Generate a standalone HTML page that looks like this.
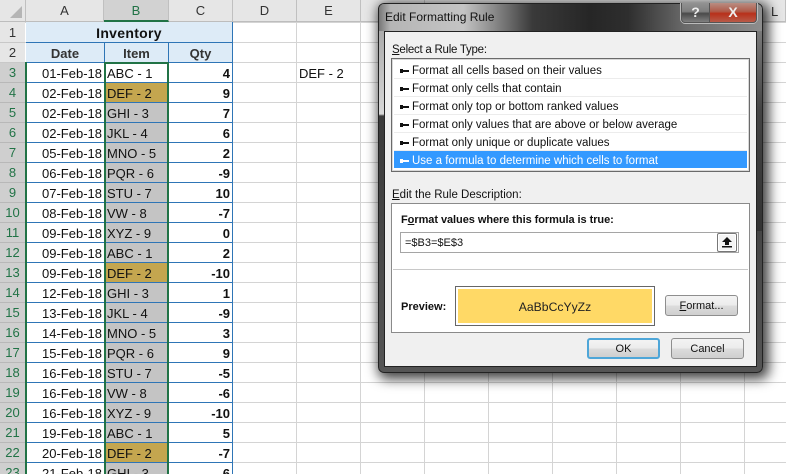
<!DOCTYPE html>
<html><head><meta charset="utf-8">
<style>
html,body{margin:0;padding:0;background:#fff}
#p{position:relative;width:786px;height:474px;overflow:hidden;font-family:"Liberation Sans",sans-serif;font-size:13px;color:#111;
background-color:#fff;
background-image:repeating-linear-gradient(to bottom,transparent 0,transparent 19px,#d4d4d4 19px,#d4d4d4 20px),repeating-linear-gradient(to right,transparent 0,transparent 63px,#d4d4d4 63px,#d4d4d4 64px);
background-position:0 3px,41px 0}
#p div,#p span{position:absolute;white-space:nowrap}
.ch{top:0;height:22px;line-height:22px;background:#e6e6e6;border-right:1px solid #c0c0c0;text-align:center;color:#333;font-size:13px;border-bottom:1px solid #bdbdbd;box-sizing:border-box}
.rh{left:0;width:25px;height:20px;line-height:20px;text-align:center;background:#cfcfcf;color:#217346;border-bottom:1px solid #b8b8b8;box-sizing:border-box;font-size:13px}
.r{left:26px;width:207px;height:20px;box-sizing:border-box;border-bottom:1px solid #2e75b6;border-right:1px solid #2e75b6;line-height:21px;background:#fff}
.r .a{left:0;width:76px;text-align:right}
.r .b{left:79px;width:64px;height:19px;padding-left:2px;box-sizing:border-box;background:#c4c4c4}
.r .d{left:79px;width:64px;height:19px;padding-left:2px;box-sizing:border-box;background:#c4a64f}
.r .c{left:143px;width:61px;text-align:right;font-weight:bold}
.it{left:394px;width:353px;height:17px;line-height:21px;border-bottom:1px solid #ececec;font-size:11.5px;color:#111}
.it span{left:18px;top:0}
.it svg{position:absolute;left:6px;top:7px}
.btn{height:21px;box-sizing:border-box;border:1px solid #8e8e8e;border-radius:3px;line-height:20px;text-align:center;font-size:11px;background:linear-gradient(#f3f3f3 0,#ececec 48%,#dcdcdc 52%,#cfcfcf 100%);color:#111}
</style></head><body>
<div id="p">
<!-- column headers -->
<div style="left:0;top:0;width:26px;height:22px;background:#e6e6e6;border-right:1px solid #c0c0c0;box-sizing:border-box;border-bottom:1px solid #bdbdbd"></div>
<svg style="position:absolute;left:9px;top:5px" width="14" height="14"><polygon points="13,1 13,13 1,13" fill="#b5b5b5"/></svg>
<div class="ch" style="left:26px;width:78px">A</div>
<div class="ch" style="left:104px;width:65px;background:#d2d2d2;border-bottom:2px solid #217346;color:#217346">B</div>
<div class="ch" style="left:169px;width:64px">C</div>
<div class="ch" style="left:233px;width:64px">D</div>
<div class="ch" style="left:297px;width:64px">E</div>
<div class="ch" style="left:361px;width:64px"></div>
<div class="ch" style="left:425px;width:361px"></div>
<div style="left:771px;top:0;height:21px;line-height:23px;color:#333">L</div>
<!-- row headers -->
<div class="rh" style="top:22px;height:21px;line-height:22px;background:#e6e6e6;color:#333;border-bottom-color:#c8c8c8">1</div>
<div class="rh" style="top:43px;background:#e6e6e6;color:#333;border-bottom-color:#c8c8c8">2</div>
<div class="rh" style="top:63px">3</div><div class="rh" style="top:83px">4</div><div class="rh" style="top:103px">5</div><div class="rh" style="top:123px">6</div><div class="rh" style="top:143px">7</div><div class="rh" style="top:163px">8</div><div class="rh" style="top:183px">9</div><div class="rh" style="top:203px">10</div><div class="rh" style="top:223px">11</div><div class="rh" style="top:243px">12</div><div class="rh" style="top:263px">13</div><div class="rh" style="top:283px">14</div><div class="rh" style="top:303px">15</div><div class="rh" style="top:323px">16</div><div class="rh" style="top:343px">17</div><div class="rh" style="top:363px">18</div><div class="rh" style="top:383px">19</div><div class="rh" style="top:403px">20</div><div class="rh" style="top:423px">21</div><div class="rh" style="top:443px">22</div><div class="rh" style="top:463px">23</div>
<!-- title rows -->
<div style="left:26px;top:22px;width:207px;height:21px;box-sizing:border-box;background:#ddebf7;border-bottom:1px solid #2e75b6;border-right:1px solid #2e75b6;text-align:center;font-weight:bold;line-height:23px;font-size:14px;letter-spacing:.3px">Inventory</div>
<div style="left:26px;top:43px;width:207px;height:20px;box-sizing:border-box;background:#ddebf7;border-bottom:1px solid #2e75b6;border-right:1px solid #2e75b6;font-weight:bold;color:#333">
<span style="left:0;width:78px;text-align:center;line-height:21px">Date</span><span style="left:78px;width:65px;text-align:center;line-height:21px">Item</span><span style="left:143px;width:63px;text-align:center;line-height:21px">Qty</span>
<span style="left:78px;top:0;width:1px;height:20px;background:#2e75b6"></span><span style="left:142px;top:0;width:1px;height:20px;background:#2e75b6"></span></div>
<!-- data rows -->
<div class="r" style="top:63px"><span class="a">01-Feb-18</span><span class="b" style="background:#fff">ABC - 1</span><span class="c">4</span></div>
<div class="r" style="top:83px"><span class="a">02-Feb-18</span><span class="d">DEF - 2</span><span class="c">9</span></div>
<div class="r" style="top:103px"><span class="a">02-Feb-18</span><span class="b">GHI - 3</span><span class="c">7</span></div>
<div class="r" style="top:123px"><span class="a">02-Feb-18</span><span class="b">JKL - 4</span><span class="c">6</span></div>
<div class="r" style="top:143px"><span class="a">05-Feb-18</span><span class="b">MNO - 5</span><span class="c">2</span></div>
<div class="r" style="top:163px"><span class="a">06-Feb-18</span><span class="b">PQR - 6</span><span class="c">-9</span></div>
<div class="r" style="top:183px"><span class="a">07-Feb-18</span><span class="b">STU - 7</span><span class="c">10</span></div>
<div class="r" style="top:203px"><span class="a">08-Feb-18</span><span class="b">VW - 8</span><span class="c">-7</span></div>
<div class="r" style="top:223px"><span class="a">09-Feb-18</span><span class="b">XYZ - 9</span><span class="c">0</span></div>
<div class="r" style="top:243px"><span class="a">09-Feb-18</span><span class="b">ABC - 1</span><span class="c">2</span></div>
<div class="r" style="top:263px"><span class="a">09-Feb-18</span><span class="d">DEF - 2</span><span class="c">-10</span></div>
<div class="r" style="top:283px"><span class="a">12-Feb-18</span><span class="b">GHI - 3</span><span class="c">1</span></div>
<div class="r" style="top:303px"><span class="a">13-Feb-18</span><span class="b">JKL - 4</span><span class="c">-9</span></div>
<div class="r" style="top:323px"><span class="a">14-Feb-18</span><span class="b">MNO - 5</span><span class="c">3</span></div>
<div class="r" style="top:343px"><span class="a">15-Feb-18</span><span class="b">PQR - 6</span><span class="c">9</span></div>
<div class="r" style="top:363px"><span class="a">16-Feb-18</span><span class="b">STU - 7</span><span class="c">-5</span></div>
<div class="r" style="top:383px"><span class="a">16-Feb-18</span><span class="b">VW - 8</span><span class="c">-6</span></div>
<div class="r" style="top:403px"><span class="a">16-Feb-18</span><span class="b">XYZ - 9</span><span class="c">-10</span></div>
<div class="r" style="top:423px"><span class="a">19-Feb-18</span><span class="b">ABC - 1</span><span class="c">5</span></div>
<div class="r" style="top:443px"><span class="a">20-Feb-18</span><span class="d">DEF - 2</span><span class="c">-7</span></div>
<div class="r" style="top:463px"><span class="a">21-Feb-18</span><span class="b">GHI - 3</span><span class="c">6</span></div>
<!-- selection lines -->
<div style="left:25px;top:62px;width:2px;height:412px;background:#217346"></div>
<div style="left:104px;top:62px;width:2px;height:412px;background:#217346"></div>
<div style="left:167px;top:62px;width:2px;height:412px;background:#217346"></div>
<div style="left:104px;top:62px;width:65px;height:2px;background:#217346"></div>
<div style="left:299px;top:63px;line-height:21px">DEF - 2</div>
<!-- dialog -->
<div style="left:378px;top:3px;width:385px;height:370px;border-radius:6px;box-shadow:3px 3px 12px 3px rgba(0,0,0,.75);background:linear-gradient(#9c9c9c 0,#d8d8d8 110px,#3a3a3a 112px,#555 100%);border:1px solid #222;box-sizing:border-box"></div>
<div style="left:757px;top:31px;width:5px;height:200px;background:linear-gradient(#7a7a7a,#444 40%,#333)"></div>
<!-- title bar glass -->
<div style="left:379px;top:4px;width:383px;height:27px;border-radius:5px 5px 0 0;background:linear-gradient(to right,#777 0,#b5b5b5 3%,#c4c4c4 22%,#8a8a8a 30%,#3a3a3a 40%,#262626 55%,#2e2e2e 65%,#6a6a6a 80%,#8d8d8d 100%)"></div>
<div style="left:385px;top:9px;font-size:12px;line-height:17px;color:#111">Edit Formatting Rule</div>
<!-- caption buttons -->
<div style="left:681px;top:3px;width:29px;height:20px;box-sizing:border-box;border:1px solid #555;border-top:0;border-radius:0 0 0 4px;box-shadow:0 1px 0 #bbb,-1px 0 0 #bbb;background:linear-gradient(#929292,#7e7e7e 45%,#4a4a4a 55%,#808080);color:#eee;font-weight:bold;font-size:14px;text-align:center;line-height:19px">?</div>
<div style="left:710px;top:3px;width:47px;height:20px;box-sizing:border-box;border:1px solid #555;border-top:0;border-left:0;border-radius:0 0 4px 0;box-shadow:0 1px 0 #bbb,1px 0 0 #bbb;background:linear-gradient(#b98d82,#b05a48 45%,#b8301a 55%,#b85a48);color:#eee;font-weight:bold;font-size:14px;text-align:center;line-height:19px">X</div>
<!-- client -->
<div style="left:384px;top:31px;width:373px;height:336px;box-sizing:border-box;background:#f0f0f0;border:1px solid #222"></div>
<div style="left:392px;top:42px;font-size:11.5px;line-height:17px;letter-spacing:-.25px;color:#111"><u>S</u>elect a Rule Type:</div>
<!-- listbox -->
<div style="left:391px;top:58px;width:359px;height:114px;box-sizing:border-box;background:#fff;border:1px solid #6a6a6a;box-shadow:inset 0 0 0 1px #d8d8d8"></div>
<div class="it" style="top:61px"><svg width="10" height="6"><path d="M0 1 L3 1 L3 2 L9 2 L9 4 L3 4 L3 5 L0 5 Z" fill="#111"/></svg><span>Format all cells based on their values</span></div>
<div class="it" style="top:79px"><svg width="10" height="6"><path d="M0 1 L3 1 L3 2 L9 2 L9 4 L3 4 L3 5 L0 5 Z" fill="#111"/></svg><span>Format only cells that contain</span></div>
<div class="it" style="top:97px"><svg width="10" height="6"><path d="M0 1 L3 1 L3 2 L9 2 L9 4 L3 4 L3 5 L0 5 Z" fill="#111"/></svg><span>Format only top or bottom ranked values</span></div>
<div class="it" style="top:115px"><svg width="10" height="6"><path d="M0 1 L3 1 L3 2 L9 2 L9 4 L3 4 L3 5 L0 5 Z" fill="#111"/></svg><span>Format only values that are above or below average</span></div>
<div class="it" style="top:133px"><svg width="10" height="6"><path d="M0 1 L3 1 L3 2 L9 2 L9 4 L3 4 L3 5 L0 5 Z" fill="#111"/></svg><span>Format only unique or duplicate values</span></div>
<div class="it" style="top:151px;background:#3399ff;color:#fff;border:0"><svg width="10" height="6"><path d="M0 1 L3 1 L3 2 L9 2 L9 4 L3 4 L3 5 L0 5 Z" fill="#fff"/></svg><span>Use a formula to determine which cells to format</span></div>
<div style="left:392px;top:187px;font-size:11.5px;line-height:16px;color:#111"><u>E</u>dit the Rule Description:</div>
<!-- description box -->
<div style="left:391px;top:203px;width:359px;height:130px;box-sizing:border-box;background:#fff;border:1px solid #8a8a8a"></div>
<div style="left:401px;top:212px;font-size:11px;font-weight:bold;line-height:16px;letter-spacing:-.06px;color:#111">F<u>o</u>rmat values where this formula is true:</div>
<div style="left:400px;top:232px;width:339px;height:21px;box-sizing:border-box;background:#fff;border:1px solid #a5a5a5;font-size:11px;line-height:21px;padding-left:4px">=$B3=$E$3</div>
<div style="left:717px;top:233px;width:20px;height:19px;box-sizing:border-box;background:#f4f4f4;border:1px solid #777;border-radius:2px;box-shadow:inset 0 0 0 1px #fff"></div>
<svg style="position:absolute;left:721px;top:236px" width="13" height="13"><path d="M6 1 L11 6 L8 6 L8 9 L4 9 L4 6 L1 6 Z" fill="#111"/><rect x="1" y="10" width="10" height="1.5" fill="#111"/></svg>
<div style="left:393px;top:269px;width:355px;height:1px;background:#c8c8c8"></div>
<div style="left:401px;top:299px;font-size:11px;font-weight:bold;line-height:16px;color:#111">Preview:</div>
<div style="left:455px;top:286px;width:200px;height:40px;box-sizing:border-box;background:#fff;border:1px solid #666"></div>
<div style="left:458px;top:289px;width:194px;height:34px;background:#ffd966;text-align:center;line-height:36px;font-size:12.2px;color:#222">AaBbCcYyZz</div>
<div class="btn" style="left:665px;top:295px;width:73px"><u>F</u>ormat...</div>
<div class="btn" style="left:587px;top:338px;width:73px;border:2px solid #4ea6d8;line-height:19px">OK</div>
<div class="btn" style="left:671px;top:338px;width:73px">Cancel</div>
</div>
</body></html>
